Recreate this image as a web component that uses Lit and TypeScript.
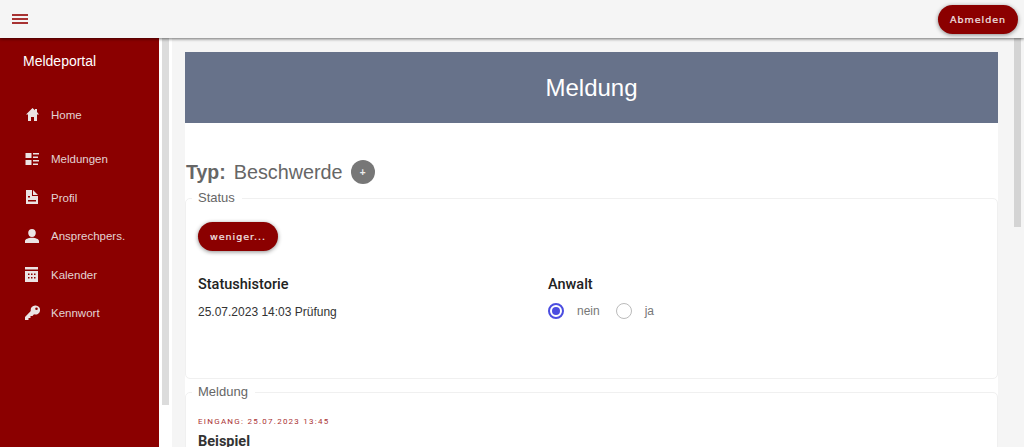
import { LitElement, html, css, svg } from 'lit';
import { customElement } from 'lit/decorators.js';

const NAV = [
  { label: 'Home', gap: 0, icon: svg`<path d="M8.500 1 11 3.200V2h2v3l2 2.500h-2V14h-3v-4H7v4H4V7.500H2z"/>` },
  { label: 'Meldungen', gap: 6, icon: svg`<path d="M1.500 2h6v5h-6zM1.500 9h6v5h-6zM9 2h6v1.500H9zM9 5.500h5V7H9zM9 9h6v1.500H9zM9 12.500h5V14H9z"/>` },
  { label: 'Profil', gap: 0, icon: svg`<path fill-rule="evenodd" d="M2 0h6v6h6v8H2zM4 6v1.500h2V6zM4 10v1.500h8V10zM9 0l5 5H9z"/>` },
  { label: 'Ansprechpers.', gap: 0, icon: svg`<path d="M8 1c2.200 0 3.800 1.700 3.800 3.900S10.200 9 8 9 4.200 7.100 4.200 4.900 5.800 1 8 1zM1 15v-1.800C1 11 4.500 9.800 8 9.800s7 1.200 7 3.400V15z"/>` },
  { label: 'Kalender', gap: 0, icon: svg`<path fill-rule="evenodd" d="M1 0h13v2.500H1zM1 4h13v11H1zM4 6.500V8h1.500V6.500zM7 6.500V8h1.500V6.500zM10 6.500V8h1.500V6.500zM4 10v1.500h1.500V10zM7 10v1.500h1.500V10zM10 10v1.500h1.500V10z"/>` },
  { label: 'Kennwort', gap: 0, icon: svg`<path fill-rule="evenodd" d="M11.500.500a4.500 4.500 0 1 1-1.500 8.700L8.500 11h-2v2h-2v2H1v-3l5.800-6a4.500 4.500 0 0 1 4.700-5.500zM12.500 2.500a1.300 1.300 0 1 0 0 2.600 1.300 1.300 0 0 0 0-2.600z"/>` },
];

@customElement('app-root')
export class AppRoot extends LitElement {
  static styles = css`
    :host {
      display: block;
      height: 447px;
      overflow: hidden;
      font-family: 'Roboto', 'Liberation Sans', sans-serif;
      background: #f5f5f5;
    }
    .topbar {
      position: relative;
      z-index: 2;
      height: 38px;
      background: #f5f5f5;
      box-shadow: 0 1px 3px rgba(0, 0, 0, 0.55);
      display: flex;
      align-items: center;
      justify-content: space-between;
      padding: 0 6px 0 12px;
    }
    .burger {
      width: 16px;
      height: 10px;
      display: flex;
      flex-direction: column;
      justify-content: space-between;
    }
    .burger span {
      height: 2px;
      background: #a83232;
    }
    .btn {
      background: #8b0000;
      color: #f3e6e6;
      border: 0;
      border-radius: 15px;
      font-family: 'DejaVu Sans', sans-serif;
      font-size: 9.500px;
      letter-spacing: 1px;
      height: 29px;
      padding: 0;
      box-shadow: 0 1px 4px rgba(0, 0, 0, 0.45);
      -webkit-text-stroke: 0.2px #f3e6e6;
    }
    .logout {
      width: 80px;
      margin-top: 1px;
    }
    .body {
      display: flex;
      height: 409px;
    }
    .sidebar {
      width: 159px;
      flex: none;
      background: #8b0000;
      color: #fff;
      padding-top: 14px;
      box-sizing: border-box;
    }
    .brand {
      font-family: 'Liberation Sans', sans-serif;
      font-size: 14px;
      line-height: 18px;
      padding-left: 23px;
      margin-bottom: 25.500px;
    }
    .nav {
      display: flex;
      align-items: center;
      height: 38.500px;
      padding-left: 24px;
      gap: 11px;
      font-family: 'Liberation Sans', sans-serif;
      font-size: 11.500px;
      color: #e3d3d3;
    }
    .nav svg {
      width: 16px;
      height: 16px;
      fill: #ebe4e4;
      flex: none;
    }
    .side-track {
      width: 13px;
      flex: none;
      background: #fff;
      padding-left: 3px;
      box-sizing: border-box;
    }
    .side-thumb {
      width: 7px;
      height: 367px;
      background: #dcdcdc;
    }
    .main {
      flex: 1;
      padding: 14px 0 0 13px;
      min-width: 0;
    }
    .panel {
      width: 813px;
      background: #fff;
      height: 500px;
    }
    .banner {
      height: 71px;
      background: #67728a;
      color: #fff;
      font-family: 'Liberation Sans', sans-serif;
      font-size: 24px;
      display: flex;
      align-items: center;
      justify-content: center;
    }
    .typ {
      display: flex;
      align-items: center;
      height: 38px;
      margin-top: 30px;
      padding-left: 1px;
      color: #666;
      font-family: 'Liberation Sans', sans-serif;
      font-size: 19.800px;
    }
    .typ b {
      margin-right: 8px;
      font-size: 19.500px;
    }
    .plus {
      width: 24px;
      height: 24px;
      margin-left: 8px;
      border-radius: 50%;
      background: #777;
      color: #eee;
      font-size: 10px;
      font-weight: 700;
      display: flex;
      align-items: center;
      justify-content: center;
    }
    fieldset {
      margin: 0;
      padding: 0 12px;
      border: 1px solid #f0f0f0;
      border-radius: 5px;
      background: #fff;
      min-width: 0;
    }
    legend {
      padding: 0 7px 0 6px;
      margin-left: -6px;
      font-size: 13px;
      line-height: 14px;
      color: #666;
      font-family: 'Liberation Sans', sans-serif;
    }
    .status {
      height: 188px;
      box-sizing: border-box;
      padding-top: 17px;
    }
    .more {
      width: 80px;
      display: block;
    }
    .cols {
      display: grid;
      grid-template-columns: 350px 1fr;
      margin-top: 25px;
    }
    h3 {
      margin: 0;
      font-size: 14.500px;
      line-height: 17px;
      font-weight: 500;
      color: #222;
    }
    .history {
      margin-top: 11px;
      font-size: 12px;
      line-height: 16px;
      color: #333;
      font-family: 'Liberation Sans', sans-serif;
    }
    .radios {
      margin-top: 10px;
      display: flex;
      align-items: center;
      font-family: 'Liberation Sans', sans-serif;
      font-size: 12px;
      color: #777;
    }
    .radio {
      width: 16px;
      height: 16px;
      border-radius: 50%;
      border: 1.500px solid #bbb;
      box-sizing: border-box;
      margin-right: 13px;
      display: flex;
      align-items: center;
      justify-content: center;
    }
    .radio.on {
      border: 2px solid #4b4de0;
    }
    .radio.on::after {
      content: '';
      width: 8px;
      height: 8px;
      border-radius: 50%;
      background: #4b4de0;
    }
    .radios .label {
      margin-right: 16px;
    }
    .meldung {
      margin-top: 6px;
      height: 80px;
      padding-top: 18px;
    }
    .date {
      font-size: 8px;
      letter-spacing: 1.250px;
      line-height: 10px;
      color: #a33;
    }
    .title {
      margin-top: 6px;
      font-size: 14.500px;
      line-height: 17px;
      font-weight: 700;
      color: #333;
    }
    .scrollbar {
      width: 13px;
      flex: none;
      padding-left: 3px;
      box-sizing: border-box;
    }
    .scroll-thumb {
      width: 7px;
      height: 189px;
      background: #d4d4d4;
    }
  `;

  render() {
    return html`
      <div class="topbar">
        <div class="burger"><span></span><span></span><span></span></div>
        <button class="btn logout">Abmelden</button>
      </div>
      <div class="body">
        <aside class="sidebar">
          <div class="brand">Meldeportal</div>
          ${NAV.map(
            (n) => html`<div class="nav" style="margin-top:${n.gap}px">
              <svg viewBox="0 0 16 16">${n.icon}</svg><span>${n.label}</span>
            </div>`
          )}
        </aside>
        <div class="side-track"><div class="side-thumb"></div></div>
        <main class="main">
          <div class="panel">
            <div class="banner">Meldung</div>
            <div class="typ"><b>Typ:</b> Beschwerde <span class="plus">+</span></div>
            <fieldset class="status">
              <legend>Status</legend>
              <button class="btn more">weniger...</button>
              <div class="cols">
                <div>
                  <h3>Statushistorie</h3>
                  <div class="history">25.07.2023 14:03 Prüfung</div>
                </div>
                <div>
                  <h3>Anwalt</h3>
                  <div class="radios">
                    <span class="radio on"></span><span class="label">nein</span>
                    <span class="radio"></span><span class="label">ja</span>
                  </div>
                </div>
              </div>
            </fieldset>
            <fieldset class="meldung">
              <legend>Meldung</legend>
              <div class="date">EINGANG: 25.07.2023 13:45</div>
              <div class="title">Beispiel</div>
            </fieldset>
          </div>
        </main>
        <div class="scrollbar"><div class="scroll-thumb"></div></div>
      </div>
    `;
  }
}
